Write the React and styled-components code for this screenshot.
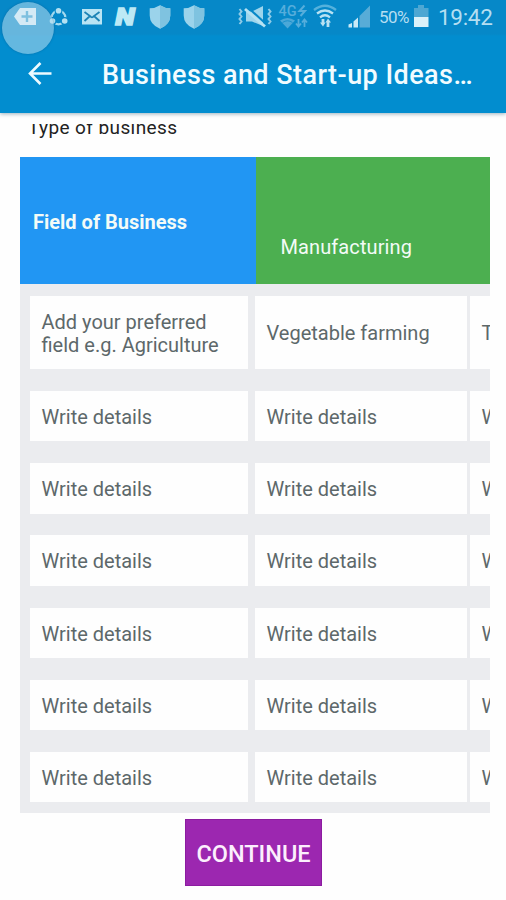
import React from 'react';
import styled, { createGlobalStyle } from 'styled-components';

const GlobalStyle = createGlobalStyle`
  * {
    box-sizing: border-box;
  }

  body {
    margin: 0;
    background-color: #fefefe;
    font-family: Roboto, 'Liberation Sans', sans-serif;
  }
`;

const Screen = styled.div`
  position: relative;
  display: flex;
  flex-direction: column;
  width: 506px;
  height: 900px;
  overflow: hidden;
  background-color: #fefefe;
`;

const Header = styled.header`
  flex: none;
  height: 113px;
  background: linear-gradient(#0688c8 0, #0688c8 34px, #028dcf 36px);
  box-shadow: 0 1px 4px rgba(0, 60, 90, 0.4);
  z-index: 1;
`;

const StatusBar = styled.div`
  display: flex;
  align-items: center;
  height: 34px;
  padding-left: 13px;
`;

const StatusIcon = styled.svg`
  flex: none;
  display: block;
  height: 34px;
  margin-left: ${(props) => props.$gap || 0}px;
`;

const BatteryText = styled.span`
  width: 31px;
  margin-left: 8px;
  font-size: 17px;
  letter-spacing: -0.6px;
  color: #b5def1;
`;

const Clock = styled.span`
  margin-left: 8px;
  font-size: 22.5px;
  letter-spacing: -0.3px;
  color: #b5def1;
`;

const AssistBubble = styled.div`
  position: absolute;
  top: 2px;
  left: 2px;
  z-index: 2;
  width: 52px;
  height: 52px;
  border-radius: 50%;
  background-color: rgba(178, 218, 238, 0.56);
  box-shadow: 0 0 2px rgba(0, 70, 120, 0.5);
`;

const TitleBar = styled.div`
  display: flex;
  align-items: center;
  height: 79px;
  padding-left: 28px;
`;

const BackArrow = styled.svg`
  flex: none;
  width: 24px;
  height: 24px;
  margin-right: 50px;
`;

const Title = styled.h1`
  margin: 3px 0 0;
  font-size: 27px;
  font-weight: 500;
  letter-spacing: 0.45px;
  white-space: nowrap;
  color: #f1fcff;
`;

const Content = styled.main`
  display: flex;
  flex-direction: column;
  padding: 11px 16px 0 19.5px;
`;

// The heading is half scrolled out under the header
const SectionTitle = styled.div`
  display: flex;
  align-items: flex-end;
  height: 16px;
  margin: 0 0 17px 8.5px;
  overflow: hidden;
  font-size: 19px;
  line-height: 24px;
  letter-spacing: 0.4px;
  color: #222;
`;

const Table = styled.div`
  height: 656px;
  overflow: hidden;
  background-color: #ebecef;
`;

const TableHead = styled.div`
  display: flex;
  height: 127px;
`;

const HeadCell = styled.div`
  flex: none;
  width: ${(props) => props.$width}px;
  padding: ${(props) => props.$padding};
  background-color: ${(props) => props.$color};
  font-size: 20px;
  font-weight: ${(props) => props.$weight || 400};
  line-height: 24px;
  letter-spacing: ${(props) => props.$spacing || 0}px;
  color: #f3fbf7;
`;

const TableBody = styled.div`
  display: grid;
  grid-template-columns: 218px 212px 212px;
  grid-template-rows: 73.3px repeat(6, 50.4px);
  column-gap: 7px;
  row-gap: 21.8px;
  padding: 12px 0 10px 10.5px;
`;

const Cell = styled.div`
  display: flex;
  align-items: center;
  margin-left: ${(props) => (props.$last ? -4 : 0)}px;
  padding: 2.4px 0 0 11.5px;
  background-color: #fefefe;
  font-size: 20px;
  line-height: 23px;
  white-space: pre-line;
  color: #5d686a;
`;

const ContinueButton = styled.button`
  align-self: center;
  width: 137px;
  height: 67px;
  margin: 6px 0 0 -2.5px;
  padding: 2px 0 0;
  border: 1px solid #8c1ca0;
  background-color: #9c27b0;
  font-family: inherit;
  font-size: 23.5px;
  font-weight: 500;
  color: #fceffd;
`;

const rows = [
  ['Add your preferred\nfield e.g. Agriculture', 'Vegetable farming', 'T'],
  ...Array.from({ length: 6 }, () => ['Write details', 'Write details', 'W']),
];

const TagIcon = () => (
  <StatusIcon width="24" viewBox="13 0 24 34">
    <path d="M14 16.5 20 8h16v17H20z" fill="#fff" />
    <path d="M27 11v11M21.5 16.5h11" stroke="#3c9fce" strokeWidth="2.4" />
  </StatusIcon>
);

const ShareIcon = () => (
  <StatusIcon width="20" viewBox="49 0 20 34" $gap={12}>
    <circle cx="58.5" cy="17.5" r="6.8" fill="none" stroke="#a5daef" strokeWidth="2.2" />
    <circle cx="58.5" cy="10.700" r="3.900" fill="#0688c8" />
    <circle cx="52.500" cy="21" r="3.900" fill="#0688c8" />
    <circle cx="64.700" cy="21" r="3.900" fill="#0688c8" />
    <circle cx="58.5" cy="10.700" r="2.800" fill="#b4e1f2" />
    <circle cx="52.500" cy="21" r="2.800" fill="#b4e1f2" />
    <circle cx="64.700" cy="21" r="2.800" fill="#b4e1f2" />
  </StatusIcon>
);

const MailIcon = () => (
  <StatusIcon width="22" viewBox="81 0 22 34" $gap={12}>
    <path d="M82 9h20v15.5H82z" fill="#b9e4f4" />
    <path d="m84.5 12 5.5 4-5.5 5M99.5 12l-5.5 4 5.5 5M90 16q2 2.8 4 0" fill="none" stroke="#1c83b5" strokeWidth="1.8" />
  </StatusIcon>
);

const BrandIcon = () => (
  <StatusIcon width="24" viewBox="114 0 24 34" $gap={11}>
    <text
      x="115.500"
      y="25"
      fontSize="23"
      fontWeight="900"
      fontStyle="italic"
      textLength="19"
      lengthAdjust="spacingAndGlyphs"
      fill="#bce9f5"
      stroke="#bce9f5"
      strokeWidth="1.600"
    >
      N
    </text>
  </StatusIcon>
);

const ShieldIcon = ({ gap }) => (
  <StatusIcon width="22" viewBox="0 0 22 34" $gap={gap}>
    <path d="M11 5.3q4.5 3 10.3 3v7.2q0 9-10.3 13.3Q.7 24.5.7 15.5V8.3Q6.5 8.3 11 5.3z" fill="#9bd3eb" />
    <path d="M11 5.3q4.5 3 10.3 3v7.2q0 9-10.3 13.3z" fill="#7fc3e0" />
  </StatusIcon>
);

const MuteIcon = () => (
  <StatusIcon width="35" viewBox="238 0 35 34" $gap={33}>
    <path d="M246 11.5h6l11-5.500v20l-11-4.500h-6z" fill="#9ed5ec" />
    <path d="m247.500 7 18 16.500" stroke="#0688c8" strokeWidth="2" />
    <path d="m245 9 20 17.500" stroke="#b6e2f3" strokeWidth="2.800" />
    <path d="m239.5 9 2 2.5-2 2.5 2 2.5-2 2.5 2 2.5-2 2.5M268.5 9l2 2.5-2 2.5 2 2.5-2 2.5 2 2.5-2 2.5" fill="none" stroke="#8fcbe7" strokeWidth="2" />
  </StatusIcon>
);

const NetworkIcon = () => (
  <StatusIcon width="30" viewBox="278 0 30 34" $gap={5}>
    <text x="278.5" y="16" fontSize="14.500" fontWeight="500" fill="#55addb">4G</text>
    <path d="m304.5 5.5-5 5.5h5.500l-4.500 5" fill="none" stroke="#55addb" strokeWidth="2" />
    <path d="M280 20.500q7.500-5 15 0l-7.500 8z" fill="#4ba8d8" />
    <path d="M282.500 22.500q5-3.500 10 0" fill="none" stroke="#1b90cc" strokeWidth="1" />
    <path d="M298.5 19v6M304.5 27v-6M296 23.5l2.5 3 2.5-3M302 22.5l2.5-3 2.5 3" fill="none" stroke="#55addb" strokeWidth="1.8" />
  </StatusIcon>
);

const WifiIcon = () => (
  <StatusIcon width="24" viewBox="313 0 24 34" $gap={5}>
    <path d="M314 10q11-8.5 22 0" fill="none" stroke="#55b1dc" strokeWidth="2.3" />
    <path d="M317 13.5q8-6 16 0M320 17.3q5-4 10 0" fill="none" stroke="#b9e2f3" strokeWidth="2.3" />
    <path d="M323 19v5M328 27v-6" stroke="#b9e2f3" strokeWidth="2.8" />
    <path d="m320 22.500 3 4 2.500-4zM325.500 22.500l2.500-4 3 4z" fill="#b9e2f3" />
  </StatusIcon>
);

const SignalIcon = () => (
  <StatusIcon width="23" viewBox="348 0 23 34" $gap={11}>
    <path d="M348.5 24.5 352 23v4.5h-3.5zM353.500 21.500l4.500-4v10h-4.500z" fill="#caeaf6" />
    <path d="m359.500 16 4-4v15.500h-4zM363.500 12l6.500-6.500v22h-6.500z" fill="#58acd7" />
  </StatusIcon>
);

const BatteryIcon = () => (
  <StatusIcon width="17" viewBox="413 0 17 34" $gap={3}>
    <path d="M414 8h4V5h6v3h4.5v9H414z" fill="#4da7d3" />
    <path d="M414 17h14.5v10H414z" fill="#dbf1f9" />
  </StatusIcon>
);

export default function App() {
  return (
    <Screen>
      <GlobalStyle />
      <Header>
        <StatusBar>
          <TagIcon />
          <ShareIcon />
          <MailIcon />
          <BrandIcon />
          <ShieldIcon gap={11} />
          <ShieldIcon gap={12} />
          <MuteIcon />
          <NetworkIcon />
          <WifiIcon />
          <SignalIcon />
          <BatteryText>50%</BatteryText>
          <BatteryIcon />
          <Clock>19:42</Clock>
        </StatusBar>
        <TitleBar>
          <BackArrow viewBox="0 0 24 24" fill="none" stroke="#edfaff" strokeWidth="2.6">
            <path d="M23.5 11.500H2.5M12.5 1 2 11.500 12.500 22" />
          </BackArrow>
          <Title>Business and Start-up Ideas…</Title>
        </TitleBar>
      </Header>
      <AssistBubble />
      <Content>
        <SectionTitle>Type of business</SectionTitle>
        <Table>
          <TableHead>
            <HeadCell $width={236} $padding="53px 0 0 13.5px" $color="#2196f3" $weight={700}>
              Field of Business
            </HeadCell>
            <HeadCell $width={240} $padding="78px 0 0 25px" $color="#4caf50" $spacing={0.1}>
              Manufacturing
            </HeadCell>
          </TableHead>
          <TableBody>
            {rows.map((row, i) =>
              row.map((text, j) => (
                <Cell key={`${i}-${j}`} $last={j === 2}>
                  {text}
                </Cell>
              ))
            )}
          </TableBody>
        </Table>
        <ContinueButton>CONTINUE</ContinueButton>
      </Content>
    </Screen>
  );
}
